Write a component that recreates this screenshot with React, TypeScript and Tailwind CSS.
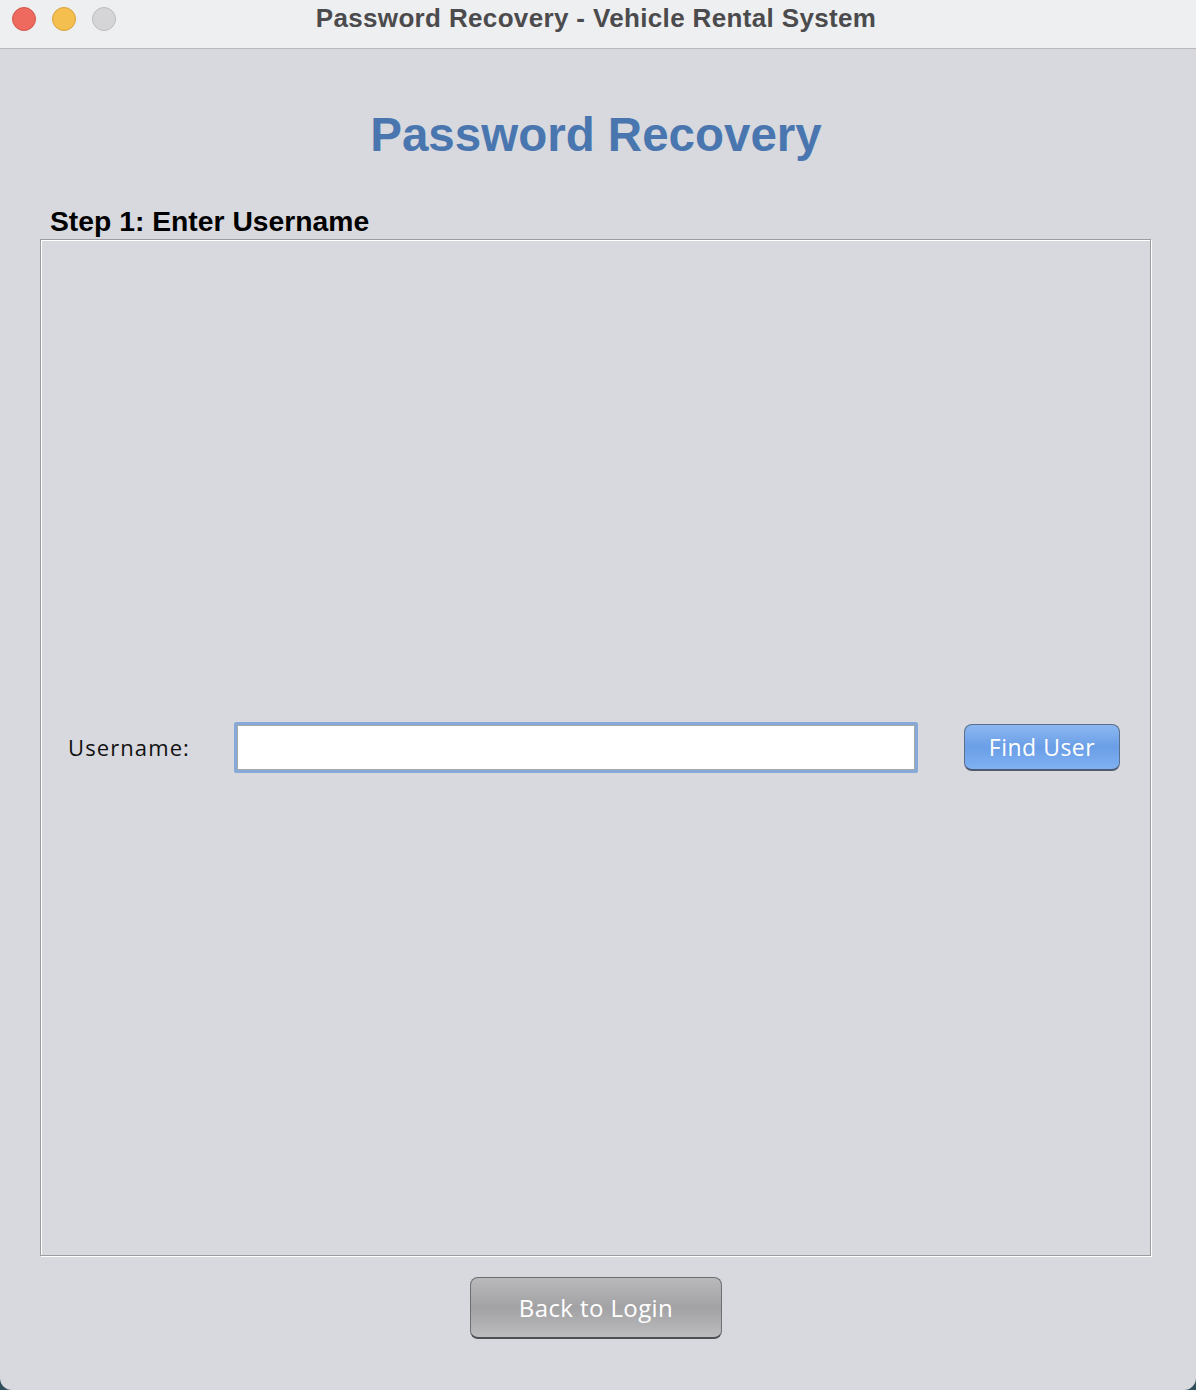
export default function App() {
    return (
        <div className="w-[1196px] h-[1390px] bg-[#2f4f5c]">
            <div className="w-full h-full flex flex-col bg-[#d8d9de] rounded-b-[12px] overflow-hidden">
                {/* Title bar */}
                <div className="relative h-[49px] shrink-0 bg-[#eeeff1] border-b border-[#b8b8bc] flex items-center justify-center">
                    <div className="absolute left-[12px] top-[7px] flex gap-[16px]">
                        <span className="w-[24px] h-[24px] rounded-full bg-[#ee6a5f] border border-[#d2564c]" />
                        <span className="w-[24px] h-[24px] rounded-full bg-[#f5bf4f] border border-[#d7a23c]" />
                        <span className="w-[24px] h-[24px] rounded-full bg-[#d5d5d7] border border-[#bdbdc0]" />
                    </div>
                    <span className="font-['Liberation_Sans',Arial,sans-serif] font-bold text-[26px] tracking-[0.35px] text-[#4b4b4d] -mt-[11px] -ml-[4px]">
                        Password Recovery - Vehicle Rental System
                    </span>
                </div>

                {/* Heading */}
                <div className="flex justify-center pt-[62px] h-[157px] shrink-0">
                    <h1 className="font-['Liberation_Sans',Arial,sans-serif] font-bold text-[47.5px] leading-none text-[#4a76b0] -ml-[4px]">
                        Password Recovery
                    </h1>
                </div>

                {/* Titled panel */}
                <div className="pl-[40px] pr-[45px] shrink-0">
                    <div className="pl-[10px] font-['Liberation_Sans',Arial,sans-serif] font-bold text-[28.3px] leading-[30px] text-black h-[33px]">
                        Step 1: Enter Username
                    </div>
                    <div className="h-[1017px] border border-[#9c9ca0] shadow-[1px_1px_0_#ffffff,inset_1px_1px_0_#ffffff] flex items-center pl-[27px] pr-[30px]">
                        <div className="flex items-center w-full font-['Open_Sans','DejaVu_Sans',sans-serif] text-[22px]">
                            <span className="w-[166px] text-[#111] tracking-[1.1px]">Username:</span>
                            <div className="w-[684px] h-[51px] rounded-[2px] border-[3px] border-[#87a9d8] p-0">
                                <div className="w-full h-full bg-white border border-[#a9a9ad]" />
                            </div>
                            <button className="ml-auto w-[156px] h-[47px] rounded-[8px] border border-[#5a6f8c] border-b-[2px] border-b-[#4e5b70] bg-gradient-to-b from-[#8cb8f2] via-[#6a9ee6] to-[#7fb1f2] text-white text-[23px] leading-none tracking-[0.5px]">
                                Find User
                            </button>
                        </div>
                    </div>
                </div>

                {/* Footer button */}
                <div className="flex justify-center pt-[21px] pr-[4px]">
                    <button className="w-[252px] h-[62px] rounded-[8px] border border-[#6e6e72] border-b-[2px] border-b-[#4f4f53] bg-gradient-to-b from-[#b9b9bb] via-[#a2a2a4] to-[#bcbcbe] text-white text-[24px] leading-none tracking-[0.4px] font-['Open_Sans','DejaVu_Sans',sans-serif]">
                        Back to Login
                    </button>
                </div>
            </div>
        </div>
    );
}
